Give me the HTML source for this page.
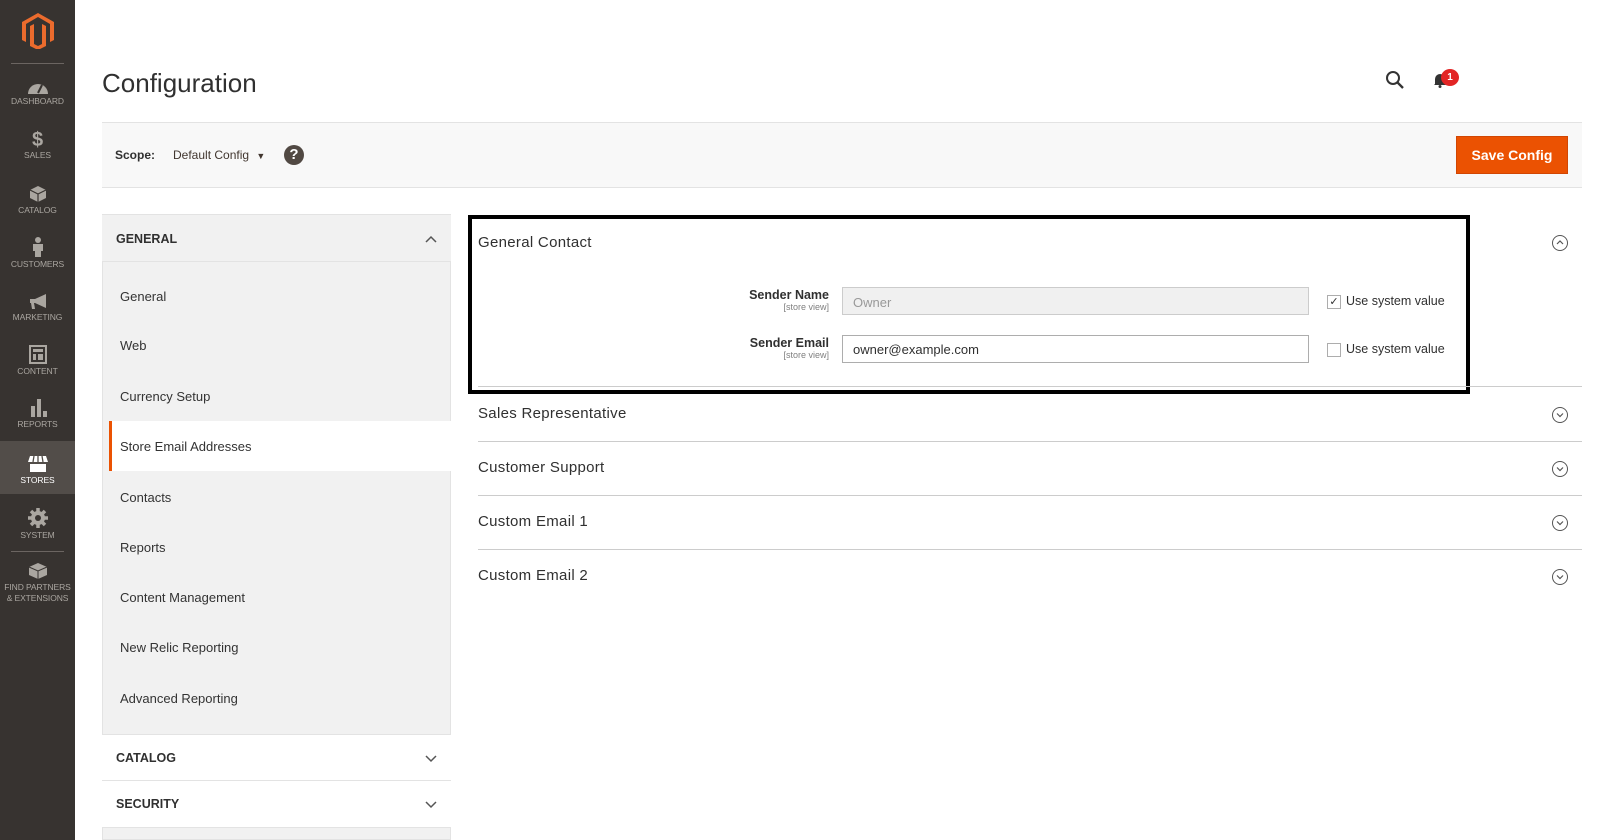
<!DOCTYPE html>
<html><head><meta charset="utf-8"><style>
*{box-sizing:border-box;margin:0;padding:0}
body{width:1600px;height:840px;overflow:hidden;background:#fff;font-family:"Liberation Sans",sans-serif;color:#303030;position:relative}
.abs{position:absolute}
#side{left:0;top:0;width:75px;height:840px;background:#373330}
.ni{position:absolute;left:0;width:75px;text-align:center;color:#aaa6a0;font-size:8.5px;letter-spacing:-.1px}
.ni svg{display:block;margin:0 auto 2px}
.sec{position:absolute;left:478px;width:1104px;font-size:15px;color:#303030;letter-spacing:.3px}
.line{position:absolute;left:478px;width:1104px;height:1px;background:#ccc}
.tog{position:absolute;left:1552px;width:16px;height:16px;border:1px solid #555;border-radius:50%}
.li{position:absolute;left:120px;font-size:13px;color:#333}
.hdr{position:absolute;left:102px;width:349px;background:#f1f1f1;border-bottom:1px solid #e3e3e3;font-weight:bold;font-size:12.5px;padding-left:14px}
</style></head><body>
<div id="side" class="abs">
 <svg class="abs" style="left:22px;top:13px" width="32" height="36" viewBox="0 0 32 36"><path d="M16 0 L32 9 V27 L28 29 V11 L16 4 L4 11 V29 L0 27 V9Z M8 13 L12 11 V31 L16 33 L20 31 V11 L24 13 V33 L16 37 L8 33Z" fill="#eb6b2d"/></svg>
 <div class="abs" style="left:11px;top:63px;width:53px;height:1px;background:#6b6561"></div>
 <div class="ni" style="top:80px"><svg width="22" height="14" viewBox="0 0 22 14"><path d="M1 14 A10 10 0 0 1 21 14Z" fill="#aaa6a0"/><path d="M11 13 L15 5" stroke="#373330" stroke-width="2"/></svg>DASHBOARD</div>
 <div class="ni" style="top:130px"><div style="font-size:20px;font-weight:bold;line-height:20px">$</div>SALES</div>
 <div class="ni" style="top:185px"><svg width="18" height="18" viewBox="0 0 18 18"><path d="M9 1 L17 5 V13 L9 17 L1 13 V5Z" fill="#aaa6a0"/><path d="M1 5 L9 9 L17 5 M9 9 V17" stroke="#373330" stroke-width="1.2" fill="none"/></svg>CATALOG</div>
 <div class="ni" style="top:237px"><svg width="12" height="20" viewBox="0 0 12 20"><circle cx="6" cy="3" r="3" fill="#aaa6a0"/><path d="M1 7 H11 V14 H9 V20 H3 V14 H1Z" fill="#aaa6a0"/></svg>CUSTOMERS</div>
 <div class="ni" style="top:294px"><svg width="20" height="16" viewBox="0 0 20 16"><path d="M2 5 H7 L18 0 V14 L7 9 H6 L7 15 H4 L3 9 H2Z" fill="#aaa6a0"/></svg>MARKETING</div>
 <div class="ni" style="top:345px"><svg width="18" height="19" viewBox="0 0 18 19"><rect x="1" y="1" width="16" height="17" fill="none" stroke="#aaa6a0" stroke-width="2"/><rect x="4" y="4" width="10" height="3" fill="#aaa6a0"/><rect x="4" y="9" width="3" height="6" fill="#aaa6a0"/><rect x="9" y="9" width="5" height="6" fill="#aaa6a0"/></svg>CONTENT</div>
 <div class="ni" style="top:399px"><svg width="18" height="18" viewBox="0 0 18 18"><rect x="2" y="7" width="4" height="11" fill="#aaa6a0"/><rect x="8" y="0" width="4" height="18" fill="#aaa6a0"/><rect x="14" y="12" width="4" height="6" fill="#aaa6a0"/></svg>REPORTS</div>
 <div class="abs" style="left:0;top:441px;width:75px;height:53px;background:#524d49"></div>
 <div class="ni" style="top:455px;color:#fff"><svg width="22" height="18" viewBox="0 0 22 18"><path d="M3 1 H19 L21 7 H1Z" fill="#fff"/><path d="M7 1 L6 7 M11 1 V7 M15 1 L16 7" stroke="#524d49" stroke-width="1.3"/><rect x="3" y="9" width="16" height="8" fill="#fff"/></svg>STORES</div>
 <div class="ni" style="top:508px"><svg width="20" height="20" viewBox="0 0 20 20"><circle cx="10" cy="10" r="7" fill="#aaa6a0"/><path d="M10 0 V20 M0 10 H20 M3 3 L17 17 M17 3 L3 17" stroke="#aaa6a0" stroke-width="3.5"/><circle cx="10" cy="10" r="3" fill="#373330"/></svg>SYSTEM</div>
 <div class="abs" style="left:11px;top:551px;width:53px;height:1px;background:#6b6561"></div>
 <div class="ni" style="top:562px;line-height:11px"><svg width="20" height="18" viewBox="0 0 20 18"><path d="M10 1 L19 5 V13 L10 17 L1 13 V5Z" fill="#aaa6a0"/><path d="M1 5 L10 9 L19 5 M10 9 V17" stroke="#373330" stroke-width="1" fill="none"/></svg>FIND PARTNERS<br>&amp; EXTENSIONS</div>
</div>

<div class="abs" style="left:102px;top:68px;font-size:26px;color:#303030">Configuration</div>
<svg class="abs" style="left:1385px;top:70px" width="20" height="20" viewBox="0 0 20 20"><circle cx="8" cy="8" r="6" fill="none" stroke="#333" stroke-width="2"/><path d="M12.5 12.5 L18 18" stroke="#333" stroke-width="2.3"/></svg>
<svg class="abs" style="left:1433px;top:72px" width="14" height="16" viewBox="0 0 14 16"><path d="M2 12 V7 A5 5 0 0 1 12 7 V12 L13 13 H1Z" fill="#333"/><circle cx="7" cy="14.5" r="1.5" fill="#333"/></svg>
<div class="abs" style="left:1441px;top:69px;width:18px;height:17px;border-radius:50%;background:#e22626;color:#fff;font-size:10px;font-weight:bold;text-align:center;line-height:17px">1</div>

<div class="abs" style="left:102px;top:122px;width:1480px;height:66px;background:#f8f8f8;border-top:1px solid #e3e3e3;border-bottom:1px solid #e3e3e3"></div>
<div class="abs" style="left:115px;top:148px;font-size:12px;font-weight:bold">Scope:</div>
<div class="abs" style="left:173px;top:148px;font-size:12px;color:#41362f">Default Config <span style="font-size:9px;margin-left:4px">&#9660;</span></div>
<div class="abs" style="left:284px;top:145px;width:20px;height:20px;border-radius:50%;background:#514943;color:#fff;font-weight:bold;font-size:15px;text-align:center;line-height:20px">?</div>
<div class="abs" style="left:1456px;top:136px;width:112px;height:38px;background:#eb5202;border:1px solid #d14603;color:#fff;font-size:14px;font-weight:bold;text-align:center;line-height:37px">Save Config</div>

<div class="abs" style="left:102px;top:214px;width:349px;height:626px;background:#f1f1f1;border:1px solid #e3e3e3"></div>
<div class="hdr" style="top:214px;height:48px;line-height:48px;border-top:1px solid #e3e3e3">GENERAL<svg class="abs" style="left:323px;top:20px" width="12" height="8" viewBox="0 0 12 8"><path d="M1 7 L6 2 L11 7" fill="none" stroke="#555" stroke-width="1.5"/></svg></div>
<div class="li" style="top:289px">General</div>
<div class="li" style="top:338px">Web</div>
<div class="li" style="top:389px">Currency Setup</div>
<div class="abs" style="left:109px;top:421px;width:342px;height:50px;background:#fff;border-left:3px solid #eb5202"></div>
<div class="li" style="top:439px">Store Email Addresses</div>
<div class="li" style="top:490px">Contacts</div>
<div class="li" style="top:540px">Reports</div>
<div class="li" style="top:590px">Content Management</div>
<div class="li" style="top:640px">New Relic Reporting</div>
<div class="li" style="top:691px">Advanced Reporting</div>
<div class="hdr" style="top:734px;height:47px;line-height:47px;background:#fff;border-top:1px solid #e3e3e3">CATALOG<svg class="abs" style="left:323px;top:20px" width="12" height="8" viewBox="0 0 12 8"><path d="M1 1 L6 6 L11 1" fill="none" stroke="#555" stroke-width="1.5"/></svg></div>
<div class="hdr" style="top:781px;height:47px;line-height:47px;background:#fff">SECURITY<svg class="abs" style="left:323px;top:20px" width="12" height="8" viewBox="0 0 12 8"><path d="M1 1 L6 6 L11 1" fill="none" stroke="#555" stroke-width="1.5"/></svg></div>

<div class="abs" style="left:468px;top:215px;width:1002px;height:179px;border:4px solid #000"></div>
<div class="sec" style="top:234px">General Contact</div>
<div class="tog" style="top:235px"><svg width="14" height="14" viewBox="0 0 14 14"><path d="M4 8 L7 5 L10 8" fill="none" stroke="#555" stroke-width="1.2"/></svg></div>
<div class="abs" style="left:690px;top:288px;width:139px;text-align:right;font-size:12.5px;font-weight:bold;color:#303030">Sender Name<div style="font-size:9px;font-weight:normal;color:#808080">[store view]</div></div>
<div class="abs" style="left:842px;top:287px;width:467px;height:28px;background:#f0f0f0;border:1px solid #ccc;font-size:13px;color:#999;padding:7px 10px">Owner</div>
<div class="abs" style="left:1327px;top:295px;width:14px;height:14px;border:1px solid #adadad;font-size:11px;line-height:12px;text-align:center">&#10003;</div>
<div class="abs" style="left:1346px;top:294px;font-size:12.5px">Use system value</div>
<div class="abs" style="left:690px;top:336px;width:139px;text-align:right;font-size:12.5px;font-weight:bold;color:#303030">Sender Email<div style="font-size:9px;font-weight:normal;color:#808080">[store view]</div></div>
<div class="abs" style="left:842px;top:335px;width:467px;height:28px;background:#fff;border:1px solid #adadad;font-size:13px;color:#303030;padding:6px 10px">owner@example.com</div>
<div class="abs" style="left:1327px;top:343px;width:14px;height:14px;border:1px solid #adadad"></div>
<div class="abs" style="left:1346px;top:342px;font-size:12.5px">Use system value</div>

<div class="line" style="top:386px"></div>
<div class="sec" style="top:405px">Sales Representative</div>
<div class="tog" style="top:407px"><svg width="14" height="14" viewBox="0 0 14 14"><path d="M4 5.5 L7 8.5 L10 5.5" fill="none" stroke="#555" stroke-width="1.2"/></svg></div>
<div class="line" style="top:441px"></div>
<div class="sec" style="top:459px">Customer Support</div>
<div class="tog" style="top:461px"><svg width="14" height="14" viewBox="0 0 14 14"><path d="M4 5.5 L7 8.5 L10 5.5" fill="none" stroke="#555" stroke-width="1.2"/></svg></div>
<div class="line" style="top:495px"></div>
<div class="sec" style="top:513px">Custom Email 1</div>
<div class="tog" style="top:515px"><svg width="14" height="14" viewBox="0 0 14 14"><path d="M4 5.5 L7 8.5 L10 5.5" fill="none" stroke="#555" stroke-width="1.2"/></svg></div>
<div class="line" style="top:549px"></div>
<div class="sec" style="top:567px">Custom Email 2</div>
<div class="tog" style="top:569px"><svg width="14" height="14" viewBox="0 0 14 14"><path d="M4 5.5 L7 8.5 L10 5.5" fill="none" stroke="#555" stroke-width="1.2"/></svg></div>
</body></html>
